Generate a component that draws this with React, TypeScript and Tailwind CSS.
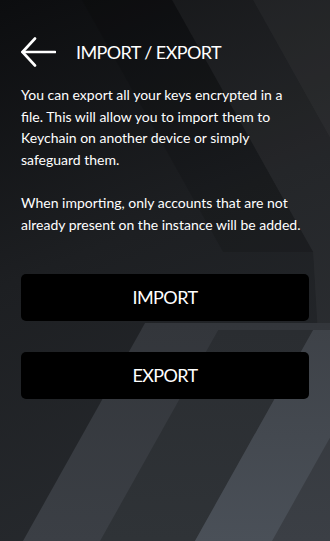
import React from 'react'

const FONT = { fontFamily: 'Lato, "Open Sans", sans-serif' }

// "/" stripes in the lower half: x = c + 0.56 * (541 - y)
const slash = (c: number, y: number) => c + 0.56 * (541 - y)
// "\" stripes in the upper half: x = c + 0.56 * y
const back = (c: number, y: number) => c + 0.56 * y

function Background() {
  return (
    <svg className="absolute inset-0 h-full w-full" viewBox="0 0 330 541" preserveAspectRatio="none">
      <defs>
        <linearGradient id="base" x1="0" y1="0" x2="0.25" y2="1">
          <stop offset="0" stopColor="#0c0d0f" />
          <stop offset="0.5" stopColor="#1d1f22" />
          <stop offset="1" stopColor="#26292d" />
        </linearGradient>
        <linearGradient id="light" x1="0" y1="0" x2="0" y2="1">
          <stop offset="0" stopColor="#33363b" />
          <stop offset="1" stopColor="#3b3f45" />
        </linearGradient>
        <linearGradient id="gap" x1="0" y1="0" x2="0" y2="1">
          <stop offset="0" stopColor="#2a2d31" />
          <stop offset="1" stopColor="#2f3337" />
        </linearGradient>
        <linearGradient id="band" x1="0" y1="0" x2="0" y2="1">
          <stop offset="0" stopColor="#3e4248" />
          <stop offset="1" stopColor="#4a5058" />
        </linearGradient>
      </defs>
      <rect width="330" height="541" fill="url(#base)" />

      {/* upper right stripes */}
      <polygon points={`${back(172, 0)},0 330,0 330,541 ${back(172, 252)},252`} fill="#ffffff" fillOpacity="0.035" />
      <polygon points={`${back(253, 0)},0 330,0 330,${(330 - 253) / 0.56}`} fill="#ffffff" fillOpacity="0.03" />
      <polygon
        points={`${back(82, 0)},0 ${back(172, 0)},0 ${back(172, 252)},252 ${back(82, 252)},252`}
        fill="#000000"
        fillOpacity="0.12"
      />

      {/* lower stripes */}
      <polygon points={`${slash(23, 323)},323 330,323 330,541 ${slash(23, 541)},541`} fill="url(#light)" />
      <polygon
        points={`${slash(100, 330)},330 ${slash(195, 330)},330 ${slash(195, 541)},541 ${slash(100, 541)},541`}
        fill="url(#gap)"
      />
      <polygon
        points={`${slash(195, 330)},330 ${slash(272, 330)},330 ${slash(272, 541)},541 ${slash(195, 541)},541`}
        fill="url(#band)"
      />
    </svg>
  )
}

function BackArrow() {
  return (
    <svg width="35" height="30" viewBox="0 0 35 30" fill="none" stroke="white" strokeWidth="2.6" strokeLinecap="round" strokeLinejoin="round">
      <line x1="1.5" y1="15" x2="34" y2="15" />
      <polyline points="14,1.5 1.5,15 14,28.5" />
    </svg>
  )
}

export default function App() {
  return (
    <div className="relative h-[541px] w-[330px] overflow-hidden text-white" style={FONT}>
      <Background />
      <div className="relative flex flex-col px-[21px] pt-[37px]">
        <div className="flex h-[29px] items-center gap-[20px]">
          <BackArrow />
          <h1 className="text-[18px] leading-none tracking-[-0.6px]">IMPORT / EXPORT</h1>
        </div>

        <div className="mt-[18px] pr-[2px] text-[14px] leading-[21.6px]">
          <p>
            You can export all your keys encrypted in a file. This will allow you to import them to Keychain on
            another device or simply safeguard them.
          </p>
          <p className="mt-[21.6px]">
            When importing, only accounts that are not already present on the instance will be added.
          </p>
        </div>

        <div className="mt-[39px] flex flex-col gap-[31px]">
          <button className="h-[47px] w-full rounded-[5px] bg-black text-[18px] tracking-[-0.6px]">IMPORT</button>
          <button className="h-[47px] w-full rounded-[5px] bg-black text-[18px] tracking-[-0.6px]">EXPORT</button>
        </div>
      </div>
    </div>
  )
}
